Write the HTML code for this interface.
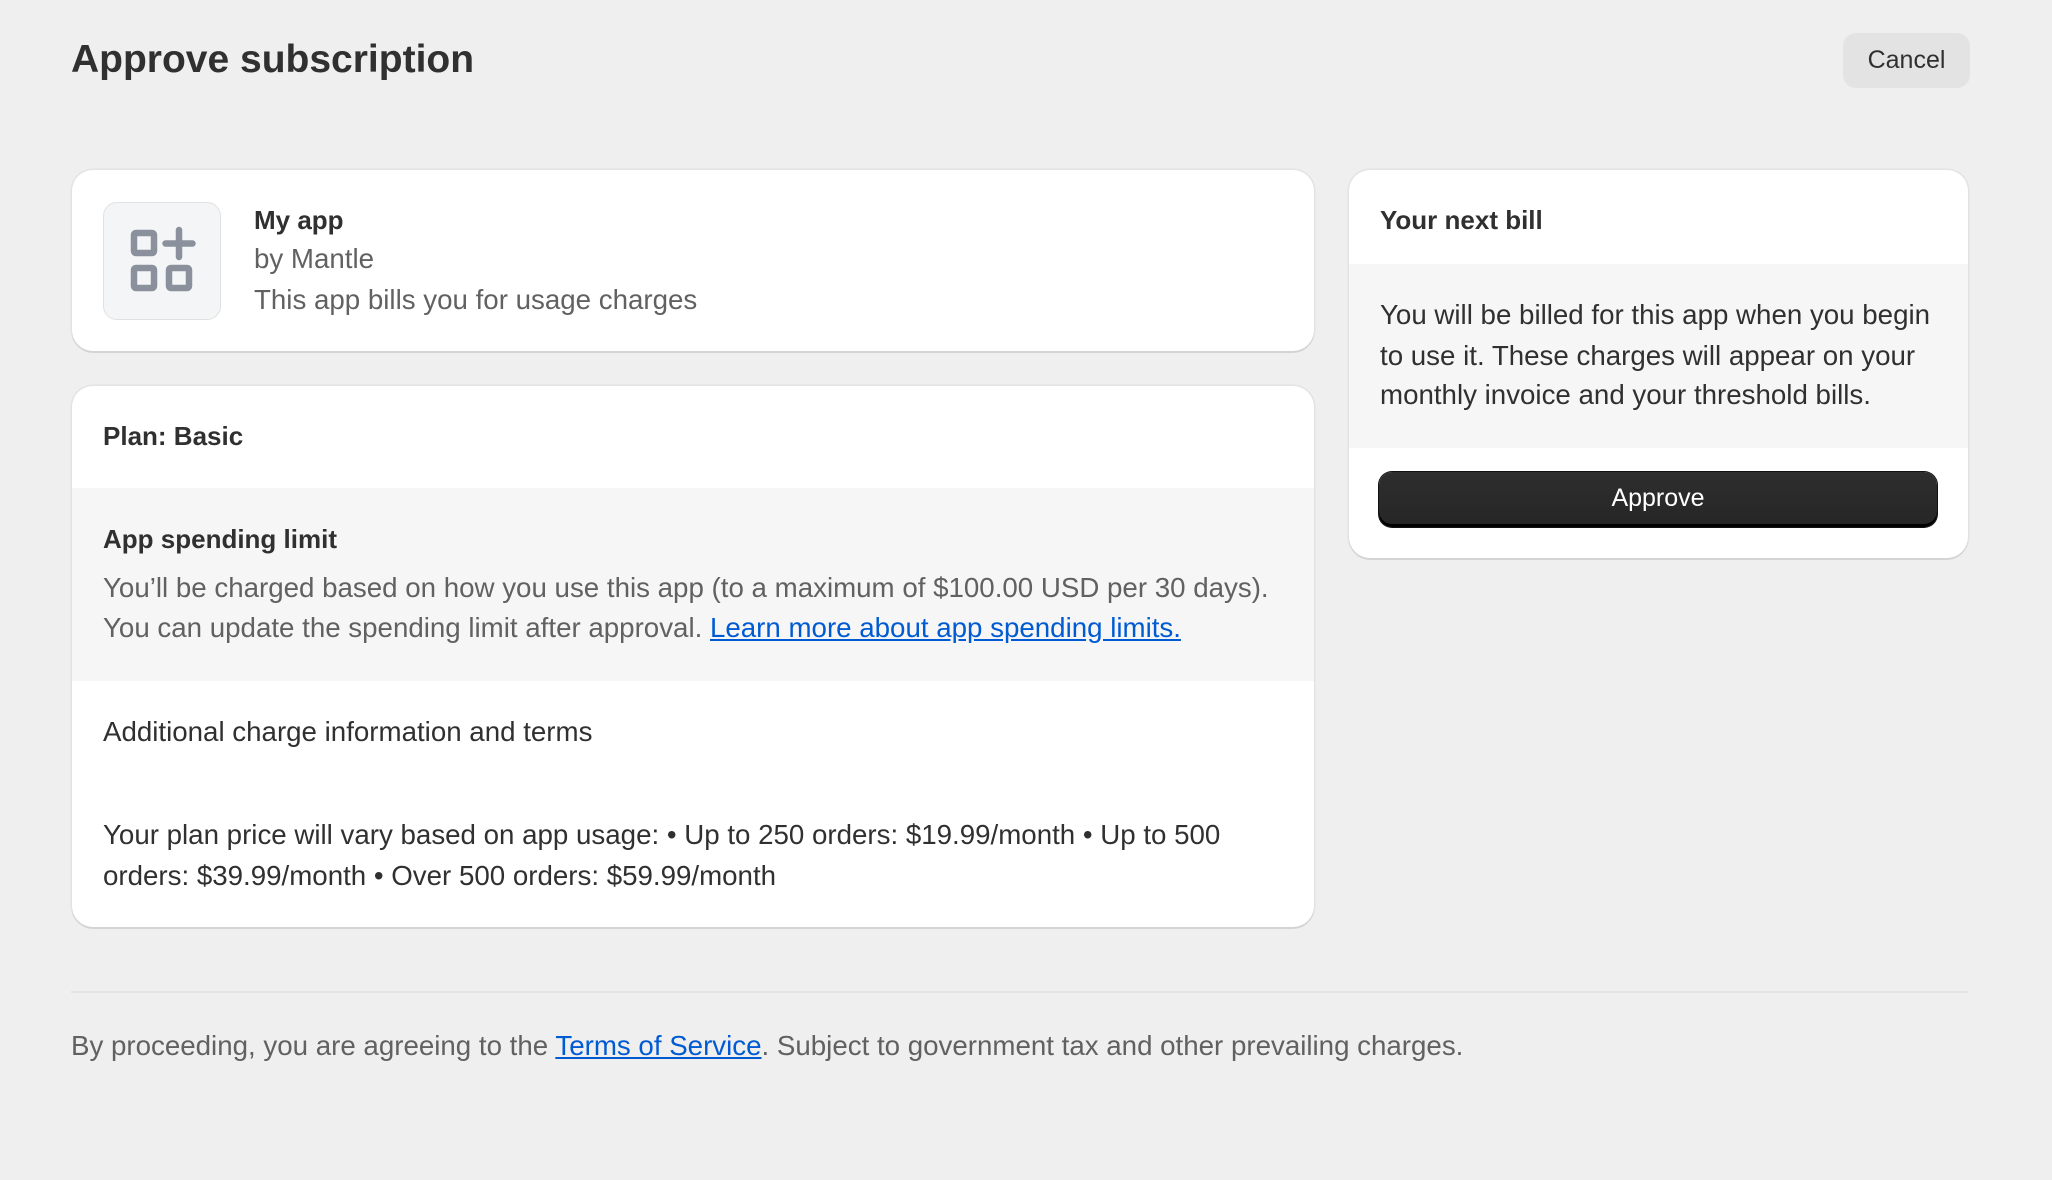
<!DOCTYPE html>
<html><head><meta charset="utf-8"><style>
*{margin:0;padding:0;box-sizing:border-box}
body{width:2052px;height:1180px;background:#efefef;font-family:"Liberation Sans",Arial,sans-serif;color:#303030;position:relative;overflow:hidden}
.a{position:absolute;white-space:nowrap}
.card{position:absolute;background:#fff;border-radius:21px;box-shadow:0 2px 0 #d4d4d4,0 0 0 1.5px #e3e3e3;overflow:hidden}
.t{font-size:27.7px;line-height:40px}
.b{font-weight:bold;font-size:26px;line-height:40px}
.g{color:#616161}
a{color:#005bd3;text-decoration:underline}
</style></head><body>
<div class="a" style="left:71px;top:37px;font-size:39px;font-weight:bold;line-height:46px;color:#303030">Approve subscription</div>
<div class="a" style="left:1843px;top:33px;width:127px;height:55px;background:#e3e3e3;border-radius:13px;font-size:25px;line-height:55px;text-align:center">Cancel</div>

<div class="card" style="left:72px;top:170px;width:1242px;height:181px">
  <div class="a" style="left:31px;top:32px;width:118px;height:118px;background:#f4f5f6;border:1.5px solid #e1e1e1;border-radius:14px">
    <svg width="118" height="118" viewBox="0 0 118 118" style="position:absolute;left:-1.5px;top:-1.5px">
      <g fill="none" stroke="#8a909c" stroke-width="6.5">
        <rect x="31" y="31" width="20" height="20" rx="2"/>
        <rect x="31" y="66" width="20" height="20" rx="2"/>
        <rect x="66" y="66" width="20" height="20" rx="2"/>
        <path d="M76 28v27M62.5 41.5h27" stroke-linecap="round"/>
      </g>
    </svg>
  </div>
  <div class="a b" style="left:182px;top:30px">My app</div>
  <div class="a t g" style="left:182px;top:69px">by Mantle</div>
  <div class="a t g" style="left:182px;top:110px">This app bills you for usage charges</div>
</div>

<div class="card" style="left:72px;top:386px;width:1242px;height:541px">
  <div class="a b" style="left:31px;top:30px">Plan: Basic</div>
  <div style="position:absolute;left:0;top:102px;width:100%;height:193px;background:#f6f6f6"></div>
  <div class="a b" style="left:31px;top:133px">App spending limit</div>
  <div class="a t g" style="left:31px;top:182px">You’ll be charged based on how you use this app (to a maximum of $100.00 USD per 30 days).</div>
  <div class="a t g" style="left:31px;top:222px">You can update the spending limit after approval. <a>Learn more about app spending limits.</a></div>
  <div class="a t" style="left:31px;top:326px">Additional charge information and terms</div>
  <div class="a t" style="left:31px;top:429px">Your plan price will vary based on app usage: • Up to 250 orders: $19.99/month • Up to 500</div>
  <div class="a t" style="left:31px;top:470px">orders: $39.99/month • Over 500 orders: $59.99/month</div>
</div>

<div class="card" style="left:1349px;top:170px;width:619px;height:388px">
  <div class="a b" style="left:31px;top:30px">Your next bill</div>
  <div style="position:absolute;left:0;top:94px;width:100%;height:184px;background:#f6f6f6"></div>
  <div class="a t" style="left:31px;top:125px">You will be billed for this app when you begin</div>
  <div class="a t" style="left:31px;top:166px">to use it. These charges will appear on your</div>
  <div class="a t" style="left:31px;top:205px">monthly invoice and your threshold bills.</div>
  <div class="a" style="left:30px;top:302px;width:558px;height:55px;background:linear-gradient(#2e2e2e,#262626);border-radius:13px;box-shadow:inset 0 -3px 0 #000,0 0 0 1px #111;color:#fff;font-size:25px;line-height:53px;text-align:center">Approve</div>
</div>

<div style="position:absolute;left:71px;top:991px;width:1897px;height:2px;background:#e4e4e4"></div>
<div class="a t g" style="left:71px;top:1026px">By proceeding, you are agreeing to the <a>Terms of Service</a>. Subject to government tax and other prevailing charges.</div>
</body></html>
